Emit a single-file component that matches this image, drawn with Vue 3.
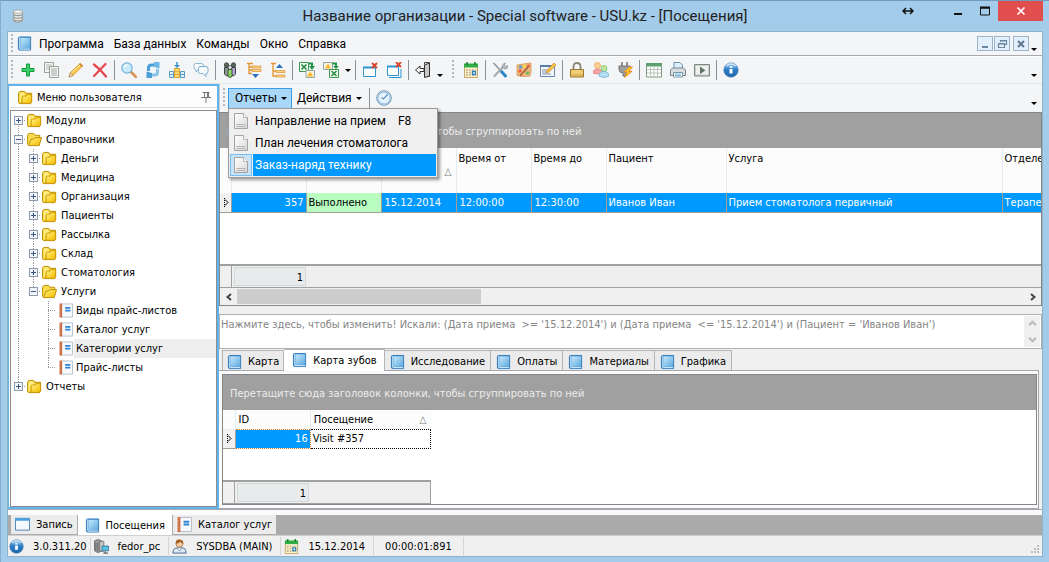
<script setup>
import { ref } from 'vue'

const menus = ['Программа', 'База данных', 'Команды', 'Окно', 'Справка']

const tools = [
  { icon: 'add', label: 'Добавить' },
  { icon: 'copy', label: 'Копировать' },
  { icon: 'edit', label: 'Изменить' },
  { icon: 'delete', label: 'Удалить' },
  { kind: 'sep' },
  { icon: 'search', label: 'Поиск' },
  { icon: 'refresh', label: 'Обновить' },
  { icon: 'columns', label: 'Колонки' },
  { icon: 'chat', label: 'Сообщения' },
  { kind: 'sep' },
  { icon: 'group', label: 'Группы' },
  { icon: 'expand', label: 'Развернуть' },
  { icon: 'collapse', label: 'Свернуть' },
  { kind: 'sep' },
  { icon: 'excel-out', label: 'Экспорт' },
  { icon: 'excel-in', label: 'Импорт' },
  { kind: 'caret', label: 'Варианты импорта' },
  { kind: 'sep' },
  { icon: 'close-win', label: 'Закрыть окно' },
  { icon: 'close-all', label: 'Закрыть все окна' },
  { kind: 'sep' },
  { icon: 'exit', label: 'Выход' },
  { kind: 'caret', low: true, label: 'Ещё' },
  { kind: 'grip' },
  { icon: 'calendar', label: 'Календарь' },
  { kind: 'sep' },
  { icon: 'tools', label: 'Настройки' },
  { icon: 'palette', label: 'Оформление' },
  { icon: 'form', label: 'Форма' },
  { kind: 'sep' },
  { icon: 'lock', label: 'Блокировка' },
  { icon: 'users', label: 'Пользователи' },
  { icon: 'plug', label: 'Подключение' },
  { kind: 'sep' },
  { icon: 'sheet', label: 'Таблица' },
  { icon: 'printer', label: 'Печать' },
  { icon: 'play', label: 'Видео' },
  { kind: 'sep' },
  { icon: 'info', label: 'О программе' },
]

// Cells before the icon: v = vertical guide, "" = blank, + / - = expander,
// t = branch, l = last branch. "up"/"down" cut the guide at an expander.
const tree = [
  { cells: ['+ down'], icon: 'folder', text: 'Модули' },
  { cells: ['- both'], icon: 'folder-open', text: 'Справочники' },
  { cells: ['v', '+ both'], icon: 'folder', text: 'Деньги' },
  { cells: ['v', '+ both'], icon: 'folder', text: 'Медицина' },
  { cells: ['v', '+ both'], icon: 'folder', text: 'Организация' },
  { cells: ['v', '+ both'], icon: 'folder', text: 'Пациенты' },
  { cells: ['v', '+ both'], icon: 'folder', text: 'Рассылка' },
  { cells: ['v', '+ both'], icon: 'folder', text: 'Склад' },
  { cells: ['v', '+ both'], icon: 'folder', text: 'Стоматология' },
  { cells: ['v', '- up'], icon: 'folder-open', text: 'Услуги' },
  { cells: ['v', '', 't'], icon: 'note', text: 'Виды прайс-листов' },
  { cells: ['v', '', 't'], icon: 'note', text: 'Каталог услуг' },
  { cells: ['v', '', 't'], icon: 'note', text: 'Категории услуг', selected: true },
  { cells: ['v', '', 'l'], icon: 'note', text: 'Прайс-листы' },
  { cells: ['+ up'], icon: 'folder', text: 'Отчеты' },
]

const reports = [
  { text: 'Направление на прием', key: 'F8' },
  { text: 'План лечения стоматолога' },
  { text: 'Заказ-наряд технику', active: true },
]

const tabs = ['Карта', 'Карта зубов', 'Исследование', 'Оплаты', 'Материалы', 'Графика']
const activeTab = ref('Карта зубов')

const windows = [
  { icon: 'window', text: 'Запись' },
  { icon: 'book', text: 'Посещения', active: true },
  { icon: 'note', text: 'Каталог услуг' },
]

const status = [
  { icon: 'info', text: '3.0.311.20' },
  { icon: 'server', text: 'fedor_pc' },
  { icon: 'person', text: 'SYSDBA (MAIN)' },
  { icon: 'calendar', text: '15.12.2014' },
  { text: '00:00:01:891' },
]

const filter = ref("Нажмите здесь, чтобы изменить! Искали: (Дата приема  >= '15.12.2014') и (Дата приема  <= '15.12.2014') и (Пациент = 'Иванов Иван')")
</script>

<template>
  <div class="window">
    <svg class="defs" aria-hidden="true">
      <defs>
        <linearGradient id="gBlue" x1="0" y1="0" x2="1" y2="1"><stop offset="0" stop-color="#c3e8fb" /><stop offset="1" stop-color="#5ea9df" /></linearGradient>
        <linearGradient id="gFolder" x1="0" y1="0" x2="1" y2="1"><stop offset="0" stop-color="#fff29a" /><stop offset=".5" stop-color="#fbd73a" /><stop offset="1" stop-color="#f0b400" /></linearGradient>
        <linearGradient id="gInfo" x1="0" y1="0" x2="0" y2="1"><stop offset="0" stop-color="#b9dcf5" /><stop offset=".45" stop-color="#2d7fc6" /><stop offset="1" stop-color="#1d65ab" /></linearGradient>
        <linearGradient id="gPage" x1="0" y1="0" x2="1" y2="1"><stop offset="0" stop-color="#ffffff" /><stop offset="1" stop-color="#d9d9d9" /></linearGradient>
      </defs>
      <symbol id="i-db" viewBox="0 0 16 16"><path d="M3 3h10v10.500c0 2-10 2-10 0z" fill="#e4e4e0" stroke="#8b8b87" stroke-width=".8" /><path d="M3 6c0 2 10 2 10 0M3 9c0 2 10 2 10 0M3 12c0 2 10 2 10 0" fill="none" stroke="#85857f" /><ellipse cx="8" cy="3" rx="5" ry="2" fill="#f7f7f4" stroke="#9a9a96" stroke-width=".8" /></symbol>
      <symbol id="i-book" viewBox="0 0 16 16"><path d="M1.500 2.500q0-1.500 1.500-1.500h11.500v14h-11.500q-1.500 0-1.500-1.500z" fill="#4d9bd8" stroke="#2f78b8" /><path d="M4 2h10v11H4z" fill="url(#gBlue)" /><path d="M3 1.500v12M3 14h11" stroke="#e2f4fd" fill="none" /></symbol>
      <symbol id="i-folder" viewBox="0 0 16 16"><path d="M.5 13.500V3.500l1.500-2h5l1.500 2h6v9l-1 2H1.500z" fill="#f6c61c" stroke="#b98b00" /><path d="M1.500 3.500l1-1h4l1.500 2-1 1.500H4l-1 7H1.500z" fill="#ffec80" /><path d="M4.500 14V7.500l1-1h3l1.500-1.500h4.500v7.500l-1.500 2z" fill="url(#gFolder)" stroke="#c59300" stroke-width=".8" /></symbol>
      <symbol id="i-folder-open" viewBox="0 0 16 16"><path d="M.5 13.500V3.500l1.500-2h5l1.500 2h5v4" fill="#fadb4c" stroke="#b98b00" /><path d="M1.500 14.500l3-7h2.500l1.500-1.500h7l-2.500 8.500z" fill="url(#gFolder)" stroke="#b98b00" /></symbol>
      <symbol id="i-note" viewBox="0 0 16 16"><path d="M3 .5h12.500v15H3z" fill="#f7f9fc" stroke="#b5bcc3" /><path d="M2 0v16" stroke="#cc6b42" stroke-width="3" /><path d="M1 .5v15" stroke="#f7d3bd" stroke-dasharray="1 1.500" /><path d="M7 5h6M7 8h6" stroke="#2f85d6" stroke-width="2" /></symbol>
      <symbol id="i-doc" viewBox="0 0 16 16"><path d="M1.500.5h9l4 4v11h-13z" fill="url(#gPage)" stroke="#a3a3a3" /><path d="M10.500.5v4h4" fill="#fff" stroke="#b5b5b5" /><path d="M3.500 11.500h9M3.500 13.500h9" stroke="#b5b5b5" /></symbol>
      <symbol id="i-add" viewBox="0 0 16 16"><path d="M6.500 2h3v4.500h4.500v3h-4.500v4.500h-3v-4.500h-4.500v-3h4.500z" fill="#3bd06a" stroke="#159a3e" /></symbol>
      <symbol id="i-copy" viewBox="0 0 16 16"><path d="M.5.5h9v10h-9z" fill="#f4f5f4" stroke="#9aa39a" /><path d="M2 3h6M2 5h6M2 7h3" stroke="#b1b8b1" /><path d="M5.500 4.500h9v11h-9z" fill="#f4f5f4" stroke="#9aa39a" /><path d="M7 7h6M7 9h6M7 11h6M7 13h6" stroke="#a3aba3" /></symbol>
      <symbol id="i-edit" viewBox="0 0 16 16"><path d="M1 15l1.500-4.500L12 1.500l2.500 2.500-9.500 9.500z" fill="#fbc84c" stroke="#d98c18" stroke-width=".8" /><path d="M1 15l1.500-4.500L5 13.500z" fill="#f2dcc0" stroke="#9b7250" stroke-width=".6" /><path d="M11 2.500l1.500-1.500L15 3.500 13.500 5z" fill="#d8873a" /><path d="M3.500 11l8.500-8" stroke="#fff0a8" /></symbol>
      <symbol id="i-delete" viewBox="0 0 16 16"><path d="M2 2.500c4 3 8 7 12 12M13.500 2C9.500 6 6 10 2 14" fill="none" stroke="#e5484f" stroke-width="2.200" stroke-linecap="round" /></symbol>
      <symbol id="i-search" viewBox="0 0 16 16"><path d="M10 10l5 5" stroke="#d69552" stroke-width="2.600" stroke-linecap="round" /><circle cx="6" cy="6" r="5.200" fill="#c9eafa" stroke="#6fb3dd" stroke-width="1.200" /><path d="M3 5.500Q4 3 6.500 3" stroke="#fff" stroke-width="1.300" fill="none" /></symbol>
      <symbol id="i-refresh" viewBox="0 0 16 16"><path d="M3.500 9V6q0-3 3-3H10" fill="none" stroke="#4a9fd8" stroke-width="3" /><path d="M9 0l5.500 0v6.500L9 5z" fill="#6db8e8" /><path d="M12.500 7v3q0 3-3 3H6" fill="none" stroke="#85c5ec" stroke-width="3" /><path d="M7 16H1.500V9.500L7 11z" fill="#4a9fd8" /></symbol>
      <symbol id="i-columns" viewBox="0 0 16 16"><path d="M.5 9.500h4v6h-4zM11.500 9.500h4v6h-4z" fill="#e2f0f8" stroke="#5a9bc9" /><path d="M5.500 6.500h5v9h-5z" fill="#ffd968" stroke="#dba332" /><path d="M1 12.500h3M12 12.500h3" stroke="#5a9bc9" /><path d="M6 9.500h4M6 12.500h4" stroke="#e0b04a" /><path d="M8 0v4" stroke="#3d92cd" stroke-width="1.500" /><path d="M5 3h6L8 6z" fill="#3d92cd" /></symbol>
      <symbol id="i-chat" viewBox="0 0 16 16"><path d="M2.500 1.500h6q2 0 2 2v2q0 2-2 2H6l-3 2.500v-2.500q-2 0-2-2v-2q0-2 1.500-2z" fill="#f7fbfd" stroke="#8ab5d0" /><path d="M7 4.500h6q2 0 2 2v3q0 2-2 2v3l-3-3H7.500q-2 0-2-2v-3q0-2 1.500-2z" fill="#f4fafd" stroke="#7facc9" /></symbol>
      <symbol id="i-group" viewBox="0 0 16 16"><path d="M2.500 5.500h4V13l-2 1-2-2zM9.500 5.500h4v6.500l-2 2-2-1z" fill="#8d9a94" stroke="#39443d" /><path d="M10.500 6h2.500v6.500h-2.500z" fill="#b9a5dd" /><circle cx="4.500" cy="3" r="2.200" fill="#59675f" stroke="#333d37" stroke-width=".8" /><circle cx="11.500" cy="3" r="2.200" fill="#59675f" stroke="#333d37" stroke-width=".8" /><path d="M6 7.500h4v7l-2 1-2-1z" fill="#8ddc5f" stroke="#39443d" stroke-width=".9" /><circle cx="8" cy="5.500" r="2" fill="#e3ece6" stroke="#333d37" stroke-width=".8" /></symbol>
      <symbol id="i-expand" viewBox="0 0 16 16"><path d="M1 1.500h6M3 2v9.500h3M3 5h3M3 8h3" fill="none" stroke="#e2932d" stroke-width="1.300" /><path d="M6 4h9v2H6zM6 7.500h9v2H6z" fill="#fbd58c" stroke="#dc922e" stroke-width=".7" /><path d="M6 12h7l-3.500 4z" fill="#2a72ba" /></symbol>
      <symbol id="i-collapse" viewBox="0 0 16 16"><path d="M1 1.500h5M3 2v12h3M3 9h3" fill="none" stroke="#e2932d" stroke-width="1.300" /><path d="M6 8.500h9v2H6zM6 13h9v2H6z" fill="#fbd58c" stroke="#dc922e" stroke-width=".7" /><path d="M6 6h7L9.500 2z" fill="#2a72ba" /></symbol>
      <symbol id="i-excel-out" viewBox="0 0 16 16"><path d="M.5.5h9v9h-9z" fill="#f2faf0" stroke="#3d9650" /><path d="M2.500 2.500l5 5M7.500 2.500l-5 5" stroke="#278b3f" stroke-width="1.600" /><path d="M9 1.500h4v3" fill="none" stroke="#23964a" stroke-width="2" /><path d="M10 4h6L13 8z" fill="#23964a" /><path d="M7 8.500h8.500v7H7z" fill="#fdf3d8" stroke="#8fa9ad" /><path d="M11 9.500l3.500 5H8z" fill="#f6b733" /></symbol>
      <symbol id="i-excel-in" viewBox="0 0 16 16"><path d="M.5.5h9v7h-9z" fill="#fdf3d8" stroke="#8fa9ad" /><path d="M5 1.500L8 6.500H2z" fill="#f6b733" /><path d="M9 1.500h4v3" fill="none" stroke="#23964a" stroke-width="2" /><path d="M10 4h6L13 7z" fill="#23964a" /><path d="M6.500 7.500h9v8h-9z" fill="#f2faf0" stroke="#3d9650" /><path d="M8.500 9l5 5M13.500 9l-5 5" stroke="#278b3f" stroke-width="1.600" /></symbol>
      <symbol id="i-close-win" viewBox="0 0 16 16"><path d="M1.500 5.500h12v9h-12z" fill="#fff" stroke="#2d95d2" /><path d="M1 5.500h13" stroke="#2d95d2" stroke-width="2" /><path d="M10 1l5 5M15 1l-5 5" stroke="#d8432c" stroke-width="1.800" /></symbol>
      <symbol id="i-close-all" viewBox="0 0 16 16"><path d="M3 15.500h12V7" fill="none" stroke="#2d95d2" /><path d="M1.500 4.500h11v9h-11z" fill="#fff" stroke="#2d95d2" /><path d="M1 4.500h12" stroke="#2d95d2" stroke-width="2" /><path d="M10 0l5 5M15 0l-5 5" stroke="#d8432c" stroke-width="1.800" /></symbol>
      <symbol id="i-exit" viewBox="0 0 16 16"><path d="M9.500 2.500v-2h5v14h-3" fill="#e4e4e4" stroke="#444" /><path d="M14.500 1l-5 2v12.500l5-1.500z" fill="#c9c9c9" stroke="#333" /><path d="M.5 8L5 4v2.500h4v3H5V12z" fill="#fff" stroke="#333" /></symbol>
      <symbol id="i-calendar" viewBox="0 0 16 16"><path d="M1.500 4h13v11.500h-13z" fill="#fff3cf" stroke="#c9a765" /><path d="M1 1.500h14v4H1z" fill="#2fac42" /><path d="M4 0v3M12 0v3" stroke="#1d7c2e" stroke-width="1.500" /><path d="M3 8h10M3 10.500h10M3 13h10" stroke="#c1b08c" stroke-width="1.500" stroke-dasharray="2 1" /><path d="M9.500 9.500h3v3h-3z" fill="#fff" stroke="#2c80bb" stroke-width="1.300" /></symbol>
      <symbol id="i-tools" viewBox="0 0 16 16"><path d="M1.500 1l7 7.500" stroke="#8b929a" stroke-width="1.500" /><path d="M9 9l4.500 5" stroke="#2986c8" stroke-width="3" stroke-linecap="round" /><path d="M2.500 14l8.500-9" stroke="#a6adb3" stroke-width="2.200" stroke-linecap="round" /><path d="M10.500 5.500q-1-3.500 3-4.500l-1 2 1.500 1.500 2-1q0 3.500-3.500 3.500z" fill="#b7bec3" stroke="#7d858b" stroke-width=".6" /></symbol>
      <symbol id="i-palette" viewBox="0 0 16 16"><path d="M1 3l6-1 8-1v9l-1 4-6 .5-7-1z" fill="#efb878" stroke="#d9975a" stroke-width=".8" /><circle cx="4.500" cy="5" r="1.700" fill="#5a9fd8" /><circle cx="8.500" cy="4" r="1.600" fill="#f8dd4b" /><circle cx="4" cy="9" r="1.700" fill="#e8604c" /><circle cx="11.500" cy="11" r="1.800" fill="#6abb62" /><circle cx="12.500" cy="4" r="1.600" fill="#e3604c" /><path d="M4 14l8-9" stroke="#a05c38" stroke-width="1.500" /></symbol>
      <symbol id="i-form" viewBox="0 0 16 16"><path d="M.5 3.500h14v11H.5z" fill="#f3f7fb" stroke="#6b86aa" /><path d="M0 4h15" stroke="#567cab" stroke-width="2" /><path d="M2 8h5M2 10h4M2 12h9" stroke="#7d93ae" /><path d="M6 11l1-3 7-7 2 2-7 7z" fill="#f8c34a" stroke="#c28425" stroke-width=".7" /></symbol>
      <symbol id="i-lock" viewBox="0 0 16 16"><path d="M4.500 8V4.500q0-3.500 3.500-3.500t3.500 3.500V8" fill="none" stroke="#8c8774" stroke-width="1.800" /><path d="M1.500 7.500h13v7.500h-13z" fill="#e9c063" stroke="#9d7a36" /><path d="M2.500 9h11M2.500 11h11" stroke="#f7dc8a" /><path d="M2.500 13h11" stroke="#d8aa48" /></symbol>
      <symbol id="i-users" viewBox="0 0 16 16"><circle cx="4.500" cy="3.500" r="3" fill="#f9cf91" stroke="#e8a95f" stroke-width=".8" /><path d="M0 11q0-4 4.500-4T9 11q-4 2-9 0z" fill="#f6a3a3" stroke="#e07f7f" stroke-width=".8" /><circle cx="11" cy="6.500" r="3" fill="#bfe6a5" stroke="#84c069" stroke-width=".8" /><path d="M6 14q0-4.500 5-4.500t5 4.500q-5 3-10 0z" fill="#b4e0f5" stroke="#6fb5d8" stroke-width=".8" /></symbol>
      <symbol id="i-plug" viewBox="0 0 16 16"><path d="M5 0v4M10 0v4" stroke="#888" stroke-width="1.800" /><path d="M2 4h11v3q0 4-4 4v3H6v-3Q2 11 2 7z" fill="#9f9f9f" stroke="#747474" /><path d="M12 5l-5 5h3l-2.500 5.500L15 9.500h-3L15.500 5z" fill="#ffc62f" stroke="#e88216" stroke-width=".8" /></symbol>
      <symbol id="i-sheet" viewBox="0 0 16 16"><path d="M.5 1.500h15v13.500H.5z" fill="#fff" stroke="#7c9b84" /><path d="M0 1h16v3.500H0z" fill="#5ea070" /><path d="M1 7.500h14M1 11h14M4.500 5v10M8 5v10M11.500 5v10" stroke="#b7c8bb" /></symbol>
      <symbol id="i-printer" viewBox="0 0 16 16"><path d="M4 7V.5h6l2.500 2.500v4" fill="#d9effb" stroke="#6c92ac" /><path d="M.5 13.500V8l2-2h11l2 2v5.500z" fill="#d8dde1" stroke="#7a858d" /><path d="M3.500 10.500h9v4.500h-9z" fill="#fff" stroke="#7d96a6" /><path d="M5 12h6M5 13.500h6" stroke="#73b6df" /></symbol>
      <symbol id="i-play" viewBox="0 0 16 16"><path d="M.5 2.500h15v11.500H.5z" fill="#cbd2ce" stroke="#7d8880" /><path d="M2 4h12v8.500H2z" fill="#edf0ee" /><path d="M6 4.500l5.500 4L6 12z" fill="#5f7467" /></symbol>
      <symbol id="i-info" viewBox="0 0 16 16"><circle cx="8" cy="8" r="7.200" fill="url(#gInfo)" stroke="#3978ad" stroke-width=".6" /><path d="M6.500 7h3v4.500h-3z" fill="#fff" /><path d="M6.500 4h3v2h-3z" fill="#d7ecfb" /><path d="M3 4q5-4 10 0" stroke="#e6f5ff" stroke-width="1.500" fill="none" opacity=".7" /></symbol>
      <symbol id="i-clock" viewBox="0 0 16 16"><circle cx="8" cy="8" r="7.300" fill="#e7f3fc" stroke="#7892ab" /><circle cx="8" cy="8" r="6" fill="none" stroke="#9ec5e8" stroke-width="1.300" /><path d="M5.500 7.500l2 1.500L11.500 4.500" fill="none" stroke="#5f8fc2" stroke-width="1.200" /></symbol>
      <symbol id="i-window" viewBox="0 0 16 16"><path d="M.5 1.500h15v12.500H.5z" fill="#f5faff" stroke="#4c7fb0" /><path d="M0 2.500h16" stroke="#4ba0e0" stroke-width="3" /></symbol>
      <symbol id="i-server" viewBox="0 0 16 16"><path d="M.5 2l4-1.500L8 2v11l-4 1.500-3.500-2z" fill="#989ca0" stroke="#555" stroke-width=".8" /><path d="M6 2.500h4.500V13H6z" fill="#c6c9cb" stroke="#666" stroke-width=".8" /><path d="M2 4v8M4 4v9" stroke="#666" /><path d="M8.500 7.500h7v5h-7z" fill="#55bfe4" stroke="#3f789b" /><path d="M10 15h5M12 13v2" stroke="#666" stroke-width="1.300" /></symbol>
      <symbol id="i-person" viewBox="0 0 16 16"><path d="M1 15q0-5.500 5-5.500h4.500q4.500 0 4.500 5.500z" fill="#dce9f7" stroke="#4d628c" /><circle cx="8" cy="5" r="3.700" fill="#f6d0a1" stroke="#9d6531" stroke-width=".8" /><path d="M4 5Q3.500 0 8 .5t4 4.500Q10 5 9 3 7 5 4 5z" fill="#a66223" /><path d="M6 10l2 3 2-3" fill="#fff" stroke="#7b90b3" stroke-width=".8" /></symbol>
      <symbol id="i-row" viewBox="0 0 6 9"><path d="M1.500 0v9" stroke="#000" stroke-dasharray="1 1" /><path d="M2 1.500l3 3-3 3" fill="none" stroke="#000" /></symbol>
    </svg>

    <header class="title">
      <svg class="appicon"><use href="#i-db" /></svg>
      <h1>Название организации - Special software - USU.kz - [Посещения]</h1>
      <div class="winctl">
        <svg class="swap" viewBox="0 0 12 8"><path d="M1 4h10M4 1L1 4l3 3M8 1l3 3-3 3" fill="none" stroke="#111" stroke-width="1.500" /></svg>
        <button aria-label="Свернуть"><svg viewBox="0 0 12 12"><path d="M2 9h8" stroke="#111" stroke-width="2" /></svg></button>
        <button aria-label="Развернуть"><svg viewBox="0 0 12 12"><path d="M1.500 3h9v7h-9z" fill="none" stroke="#111" /><path d="M1 2.500h10" stroke="#111" stroke-width="2" /></svg></button>
        <button class="close" aria-label="Закрыть"><svg viewBox="0 0 12 12"><path d="M2.500 2.500l7 7M9.500 2.500l-7 7" stroke="#fff" stroke-width="1.700" /></svg></button>
      </div>
    </header>

    <div class="client">
      <nav class="menubar">
        <i class="grip"></i>
        <svg class="menuicon"><use href="#i-book" /></svg>
        <button v-for="m in menus" :key="m">{{ m }}</button>
        <span class="fill"></span>
        <button class="mdi" aria-label="Свернуть"><svg viewBox="0 0 12 12"><path d="M3 9h6" stroke="#6c87a2" stroke-width="2" /></svg></button>
        <button class="mdi" aria-label="Восстановить"><svg viewBox="0 0 12 12"><path d="M4.500 4V2.500h6v4H9M4 3h7" fill="none" stroke="#6c87a2" stroke-width="1.200" /><path d="M2.500 5.500h6v4h-6zM2 6h7" fill="none" stroke="#6c87a2" stroke-width="1.200" /></svg></button>
        <button class="mdi last" aria-label="Закрыть"><svg viewBox="0 0 12 12"><path d="M3 3l6 6M9 3L3 9" stroke="#5f7892" stroke-width="2" /></svg></button>
        <button class="caret low" aria-label="Ещё"></button>
      </nav>

      <div class="toolbar" role="toolbar">
        <i class="grip"></i>
        <template v-for="(t, i) in tools" :key="i">
          <i v-if="t.kind === 'sep'" class="sep"></i>
          <i v-else-if="t.kind === 'grip'" class="grip inner"></i>
          <button v-else-if="t.kind === 'caret'" class="caret" :class="{ low: t.low }" :aria-label="t.label"></button>
          <button v-else class="tool" :aria-label="t.label"><svg><use :href="'#i-' + t.icon" /></svg></button>
        </template>
        <span class="fill"></span>
        <button class="caret low" aria-label="Ещё"></button>
      </div>

      <div class="body">
        <aside class="side">
          <div class="sidehead">
            <svg class="ic"><use href="#i-folder" /></svg>
            <span class="fill">Меню пользователя</span>
            <button aria-label="Закрепить"><svg class="pin" viewBox="0 0 12 12"><path d="M2.500 1.500h7M4.500 2v4M8.500 2v4M7.500 2v4M1 6.500h10M6 7v5" fill="none" stroke="#777" /></svg></button>
          </div>
          <ul class="tree">
            <li v-for="n in tree" :key="n.text">
              <span v-for="(c, i) in n.cells" :key="i" class="cell" :class="c.replace('+', 'box').replace('-', 'box minus')">
                <button v-if="c.includes('+') || c.startsWith('-')" :aria-label="n.text"></button>
              </span>
              <svg :class="n.icon === 'note' ? 'note' : 'ic'"><use :href="'#i-' + n.icon" /></svg>
              <a href="#" :class="{ selected: n.selected }">{{ n.text }}</a>
            </li>
          </ul>
        </aside>

        <main class="main">
          <div class="subbar">
            <i class="grip"></i>
            <div class="drop">
              <button class="dropbtn open">Отчеты<i class="arr"></i></button>
              <ul class="popup" role="menu">
                <li v-for="r in reports" :key="r.text" :class="{ active: r.active }">
                  <span class="gutter"><svg><use href="#i-doc" /></svg></span>
                  <button role="menuitem">{{ r.text }}<kbd v-if="r.key">{{ r.key }}</kbd></button>
                </li>
              </ul>
            </div>
            <button class="dropbtn">Действия<i class="arr"></i></button>
            <i class="sep"></i>
            <button class="tool" aria-label="Время"><svg><use href="#i-clock" /></svg></button>
            <span class="fill"></span>
            <button class="caret low" aria-label="Ещё"></button>
          </div>

          <section class="grid">
            <div class="groupbar">Перетащите сюда заголовок колонки, чтобы сгруппировать по ней</div>
            <table class="visits">
              <colgroup><col class="c-mark" /><col class="c-s" /><col class="c-s" /><col class="c-s" /><col class="c-s" /><col class="c-s" /><col class="c-pat" /><col class="c-srv" /><col /></colgroup>
              <thead>
                <tr><th></th><th></th><th></th><th class="sorted"><i>△</i></th><th>Время от</th><th>Время до</th><th>Пациент</th><th>Услуга</th><th>Отделение</th></tr>
              </thead>
              <tbody>
                <tr><td class="ind"><svg><use href="#i-row" /></svg></td><td class="num">357</td><td class="done">Выполнено</td><td class="wide">15.12.2014</td><td class="wide">12:00:00</td><td class="wide">12:30:00</td><td>Иванов Иван</td><td>Прием стоматолога первичный</td><td>Терапевтическое</td></tr>
              </tbody>
            </table>
            <div class="fill"></div>
            <div class="summary"><span class="ind"></span><output>1</output></div>
            <div class="hscroll">
              <button aria-label="Влево"><svg viewBox="0 0 8 8"><path d="M6 1L2.500 4 6 7" fill="none" stroke="#444" stroke-width="2" /></svg></button>
              <div class="track"><div class="thumb"></div></div>
              <button aria-label="Вправо"><svg viewBox="0 0 8 8"><path d="M2 1l3.500 3L2 7" fill="none" stroke="#444" stroke-width="2" /></svg></button>
            </div>
          </section>

          <div class="filter">
            <textarea v-model="filter" aria-label="Фильтр"></textarea>
            <div class="vscroll">
              <svg viewBox="0 0 8 8"><path d="M1 5.500l3-3 3 3" fill="none" stroke="#bbb" stroke-width="2" /></svg>
              <svg viewBox="0 0 8 8"><path d="M1 2.500l3 3 3-3" fill="none" stroke="#bbb" stroke-width="2" /></svg>
            </div>
          </div>

          <div class="tabs" role="tablist">
            <button v-for="t in tabs" :key="t" role="tab" :class="{ on: t === activeTab }" :aria-selected="t === activeTab" @click="activeTab = t"><svg><use href="#i-book" /></svg>{{ t }}</button>
          </div>
          <div class="pane">
            <section class="detail">
              <div class="groupbar">Перетащите сюда заголовок колонки, чтобы сгруппировать по ней</div>
              <table class="teeth">
                <colgroup><col class="c-ind" /><col class="c-s" /><col class="c-pat" /></colgroup>
                <thead><tr><th></th><th>ID</th><th class="sorted">Посещение<i>△</i></th></tr></thead>
                <tbody><tr><td class="ind"><svg><use href="#i-row" /></svg></td><td class="num">16</td><td class="focus">Visit #357</td></tr></tbody>
              </table>
              <div class="fill"></div>
              <div class="summary"><span class="ind"></span><output>1</output></div>
            </section>
          </div>
        </main>
      </div>

      <div class="wintabs">
        <button v-for="w in windows" :key="w.text" :class="{ on: w.active }"><svg><use :href="'#i-' + w.icon" /></svg>{{ w.text }}</button>
      </div>

      <footer class="status">
        <span v-for="s in status" :key="s.text"><svg v-if="s.icon"><use :href="'#i-' + s.icon" /></svg>{{ s.text }}</span>
        <i class="fill"></i>
        <svg class="size" viewBox="0 0 9 9"><path d="M6 0h2v2H6zM3 3h2v2H3zM6 3h2v2H6zM0 6h2v2H0zM3 6h2v2H3zM6 6h2v2H6z" fill="#bdbdbd" /></svg>
      </footer>
    </div>
  </div>
</template>

<style>
body { background: #a3cbea; }
</style>

<style scoped>
* { box-sizing: border-box; }
.window {
  min-height: 100vh; display: flex; flex-direction: column; padding: 0 6px 5px;
  background: #a3cbea; border-top: 1px solid #6f9cbe; border-left: 1px solid #86add0;
  font: 11px/13px "DejaVu Sans Condensed", "Open Sans", sans-serif; color: #000; white-space: nowrap;
}
.defs { position: absolute; width: 0; height: 0; }
button { font: inherit; color: inherit; background: none; border: 0; padding: 0; margin: 0; white-space: nowrap; }
ul { list-style: none; margin: 0; padding: 0; }
svg { display: block; flex: none; }
a { color: inherit; text-decoration: none; }
.fill { flex: 1; }

.title { display: grid; grid-template-columns: 1fr auto 1fr; height: 30px; align-items: center; }
.title h1 { margin: 0; font: 15px/20px Roboto, "Open Sans", sans-serif; color: #222; }
.appicon { width: 14px; height: 14px; margin-left: 4px; }
.winctl { display: flex; justify-content: flex-end; align-self: start; align-items: center; height: 20px; }
.winctl svg { width: 12px; height: 12px; }
.winctl .swap { height: 8px; margin-right: 30px; }
.winctl button { width: 27px; height: 20px; display: grid; place-items: center; }
.winctl .close { width: 45px; background: #e04e4e; }

.client { flex: 1; display: flex; flex-direction: column; min-height: 0; background: #f0f0f0; border: 1px solid #8fb1c9; }
.menubar, .toolbar, .subbar { display: flex; align-items: center; background: #f4f5f7; font: 12px/16px Roboto, "Open Sans", sans-serif; }
.menubar { height: 24px; border-bottom: 1px solid #a7a9ac; }
.toolbar { height: 28px; border-bottom: 1px solid #dfe2e6; border-top: 1px solid #fff; }
.grip { width: 2px; height: 20px; margin: 0 3px; background: repeating-linear-gradient(#b5b8bc 0 2px, transparent 2px 4px); }
.grip.inner { margin: 0 5px 0 7px; }
.menuicon { width: 15px; height: 15px; margin: 0 2px 0 1px; }
.menubar button { padding: 0 5px; }
.menubar .mdi { width: 16px; height: 15px; padding: 0; margin-right: 1px; border: 1px solid #9db3c9; background: #e3effa; display: grid; place-items: center; }
.menubar .mdi.last { margin: 0 0 0 2px; }
.mdi svg { width: 12px; height: 12px; }
.menubar .caret, .caret { width: 10px; height: 20px; padding: 0; display: grid; place-items: center; }
.caret::before, .arr { content: ""; border: 3px solid transparent; border-top-color: #000; border-bottom: 0; }
.menubar .caret.low, .caret.low { align-items: end; padding-bottom: 3px; margin-right: 3px; }
.toolbar .caret.low { margin-right: 0; }
.toolbar .fill + .caret.low { margin-right: 3px; }
.tool { width: 24px; height: 22px; display: grid; place-items: center; }
.tool svg { width: 16px; height: 16px; }
.sep { width: 1px; height: 20px; margin: 0 2px; background: #8d9095; }

.body { flex: 1; display: flex; min-height: 0; }
.side { width: 211px; flex: none; display: flex; flex-direction: column; border: 2px solid #62b5ec; border-left-width: 1px; background: #fff; padding: 1px 0 0 1px; }
.sidehead { height: 21px; display: flex; align-items: center; padding: 0 5px 0 8px; margin-bottom: 2px; border-bottom: 1px solid #dcdcdc; background: #fdfdfd; }
.ic { width: 15px; height: 15px; }
.sidehead .ic { margin-right: 4px; }
.pin { width: 12px; height: 12px; }
.tree { flex: 1; border: 1px solid #8a8d91; background: #fff; }
.tree li { display: flex; height: 19px; align-items: center; }
.cell { width: 15px; height: 19px; display: grid; place-items: center; background-repeat: no-repeat; --dot: repeating-linear-gradient(#999 0 1px, transparent 1px 2px); --dash: repeating-linear-gradient(90deg, #999 0 1px, transparent 1px 2px); }
.cell.v { background-image: var(--dot); background-size: 1px 100%; background-position: 7px 0; }
.cell.t { background-image: var(--dot), var(--dash); background-size: 1px 100%, 8px 1px; background-position: 7px 0, 7px 9px; }
.cell.l { background-image: var(--dot), var(--dash); background-size: 1px 9px, 8px 1px; background-position: 7px 0, 7px 9px; }
.cell.both { background-image: var(--dot), var(--dash); background-size: 1px 100%, 8px 1px; background-position: 7px 0, 7px 9px; }
.cell.up { background-image: var(--dot), var(--dash); background-size: 1px 9px, 8px 1px; background-position: 7px 0, 7px 9px; }
.cell.down { background-image: var(--dot), var(--dash); background-size: 1px 10px, 8px 1px; background-position: 7px 9px, 7px 9px; }
.cell button { width: 9px; height: 9px; border: 1px solid #8c9cb0; background: linear-gradient(#3a5a8c, #3a5a8c) center / 5px 1px no-repeat, linear-gradient(#3a5a8c, #3a5a8c) center / 1px 5px no-repeat, #f3f5f9; }
.cell.minus button { background: linear-gradient(#3a5a8c, #3a5a8c) center / 5px 1px no-repeat, #f3f5f9; }
.tree .ic { margin: 0 2px 0 1px; }
.note { width: 14px; height: 15px; margin: 0 1px 0 3px; }
.tree a { line-height: 19px; padding-left: 2px; }
.tree a.selected { flex: 1; background: #eeeeee; }

.main { flex: 1; min-width: 0; display: flex; flex-direction: column; }
.subbar { height: 28px; border-left: 1px solid #c9ccd0; }
.drop { position: relative; }
.dropbtn { height: 21px; padding: 0 4px; display: flex; align-items: center; gap: 4px; border: 1px solid transparent; }
.dropbtn.open { padding-left: 6px; background: #a9d7f8; border-color: #3a9ce6; }
.popup { position: absolute; z-index: 2; top: 20px; left: 0; width: 210px; padding: 1px; background: #f0f0f0; border: 1px solid #9a9a9a; box-shadow: 2px 2px 3px rgba(0, 0, 0, .4); }
.popup li { display: flex; height: 22px; }
.gutter { width: 22px; margin-right: 1px; display: grid; place-items: center; border: 1px solid transparent; }
.popup svg { width: 16px; height: 16px; }
.popup button { flex: 1; text-align: left; padding-left: 2px; }
.popup kbd { font: inherit; margin-left: 12px; }
.active .gutter { background: #c7e3f8; border-color: #79bcf0; }
.active button { background: #0099ff; color: #fff; }

.grid { height: 194px; display: flex; flex-direction: column; overflow: hidden; border: 1px solid #83868a; background: #fff; }
.groupbar { height: 35px; flex: none; padding-left: 7px; line-height: 37px; background: #a0a0a0; color: #ececec; }
table { table-layout: fixed; border-collapse: collapse; width: 100%; font: inherit; }
.c-mark { width: 11px; } .c-ind { width: 12px; } .c-s { width: 75px; } .c-pat { width: 120px; } .c-srv { width: 276px; }
th { font-weight: normal; text-align: left; vertical-align: top; padding: 0 0 0 3px; border-right: 1px solid #e2eaf2; background: #fcfcfc; overflow: hidden; }
.visits th { height: 45px; padding: 4px 0 0 2px; }
th:last-child, td:last-child { border-right: 0; }
th.sorted { position: relative; }
th i { position: absolute; right: 4px; font-style: normal; font-size: 10px; color: #777; }
.visits th i { bottom: 15px; }
td { height: 19px; padding: 0 2px; border-right: 1px solid #a59c92; border-bottom: 1px solid #a59c92; overflow: hidden; background: #0099ff; color: #fff; }
td:last-child { padding-right: 0; }
td.wide { padding-left: 3px; }
td.num { text-align: right; }
td.done { background: #b9fdc0; color: #000; }
td.ind, .summary .ind { background: #f0f0f0; border-right: 1px solid #a0a0a0; }
td.ind { padding: 0 3px; }
td.ind svg { width: 6px; height: 9px; }
.summary { height: 24px; flex: none; display: flex; border-top: 2px solid #a0a0a0; border-bottom: 1px solid #a0a0a0; background: #efefef; }
.summary .ind { width: 12px; }
.summary output { width: 72px; margin: 1px 0 1px 2px; border: 1px solid #d3d8da; background: #e7ebec; text-align: right; padding: 0 2px; line-height: 19px; }
.hscroll { height: 17px; flex: none; display: flex; align-items: center; background: #f0f0f0; }
.hscroll button { width: 17px; display: grid; place-items: center; }
.hscroll svg { width: 8px; height: 8px; }
.track { flex: 1; height: 15px; }
.thumb { width: 31%; height: 15px; background: #cdcdcd; }

.filter { height: 35px; margin-top: 8px; display: flex; border: 1px solid #adb0b4; background: #fff; }
.filter textarea { flex: 1; resize: none; overflow: hidden; border: 0; outline: 0; margin: 0; padding: 3px 1px; font: inherit; color: #858585; background: #fff; }
.vscroll { width: 16px; margin: 1px; display: flex; flex-direction: column; justify-content: space-around; align-items: center; background: #f0f0f0; }
.vscroll svg { width: 9px; height: 9px; }

.tabs { height: 22px; display: flex; align-items: flex-end; padding-left: 3px; margin-right: 3px; border-bottom: 1px solid #a5a8ac; }
.tabs button { height: 20px; display: flex; align-items: center; gap: 6px; padding: 2px 5px 0; border: 1px solid #b5b5b5; border-bottom: 0; border-left: 0; background: #ebebeb; }
.tabs button:first-child { border-left: 1px solid #b5b5b5; padding: 2px 4px 0; }
.tabs button.on { height: 22px; background: #fff; margin-bottom: -1px; padding: 0 7px 1px 8px; }
.tabs svg { width: 15px; height: 16px; }
.pane { flex: 1; display: flex; margin-right: 3px; padding: 3px 1px 3px 3px; background: #fafafa; border-right: 1px solid #a5a8ac; border-bottom: 1px solid #a5a8ac; }
.detail { flex: 1; min-width: 0; display: flex; flex-direction: column; border: 1px solid #83868a; background: #fff; }
.teeth, .detail .summary { width: 208px; }
.teeth th { height: 19px; vertical-align: middle; }
.teeth td.num { border: 1px dotted #e07820; }
.teeth td.focus { background: #fff; color: #000; border: 1px dotted #000; }
.detail .summary { border-right: 1px solid #a0a0a0; }

.wintabs { height: 27px; display: flex; align-items: flex-start; padding: 0 3px; border-top: 1px solid #a5a8ac; border-bottom: 1px solid #d0d0d0; background: linear-gradient(#fafafa 0 5px, #ababab 5px); }
.wintabs button { height: 19px; margin-top: 5px; display: flex; align-items: center; gap: 6px; padding: 0 4px; background: #ececec; }
.wintabs button.on { height: 25px; margin: 0 1px; padding: 6px 7px 0; background: #fff; }
.wintabs svg { width: 15px; height: 15px; }
.status { height: 20px; display: flex; align-items: center; background: #f0f0f0; }
.status span { height: 18px; display: flex; align-items: center; gap: 9px; padding: 0 8px 0 1px; border-right: 1px solid #d5d5d5; }
.status span:first-child { padding-right: 3px; }
.status span + span { padding-left: 3px; }
.status span:nth-child(5) { padding: 0 11px; }
.status svg { width: 15px; height: 15px; }
.status .size { width: 9px; height: 9px; align-self: flex-end; margin: 0 2px 2px 0; }
</style>
